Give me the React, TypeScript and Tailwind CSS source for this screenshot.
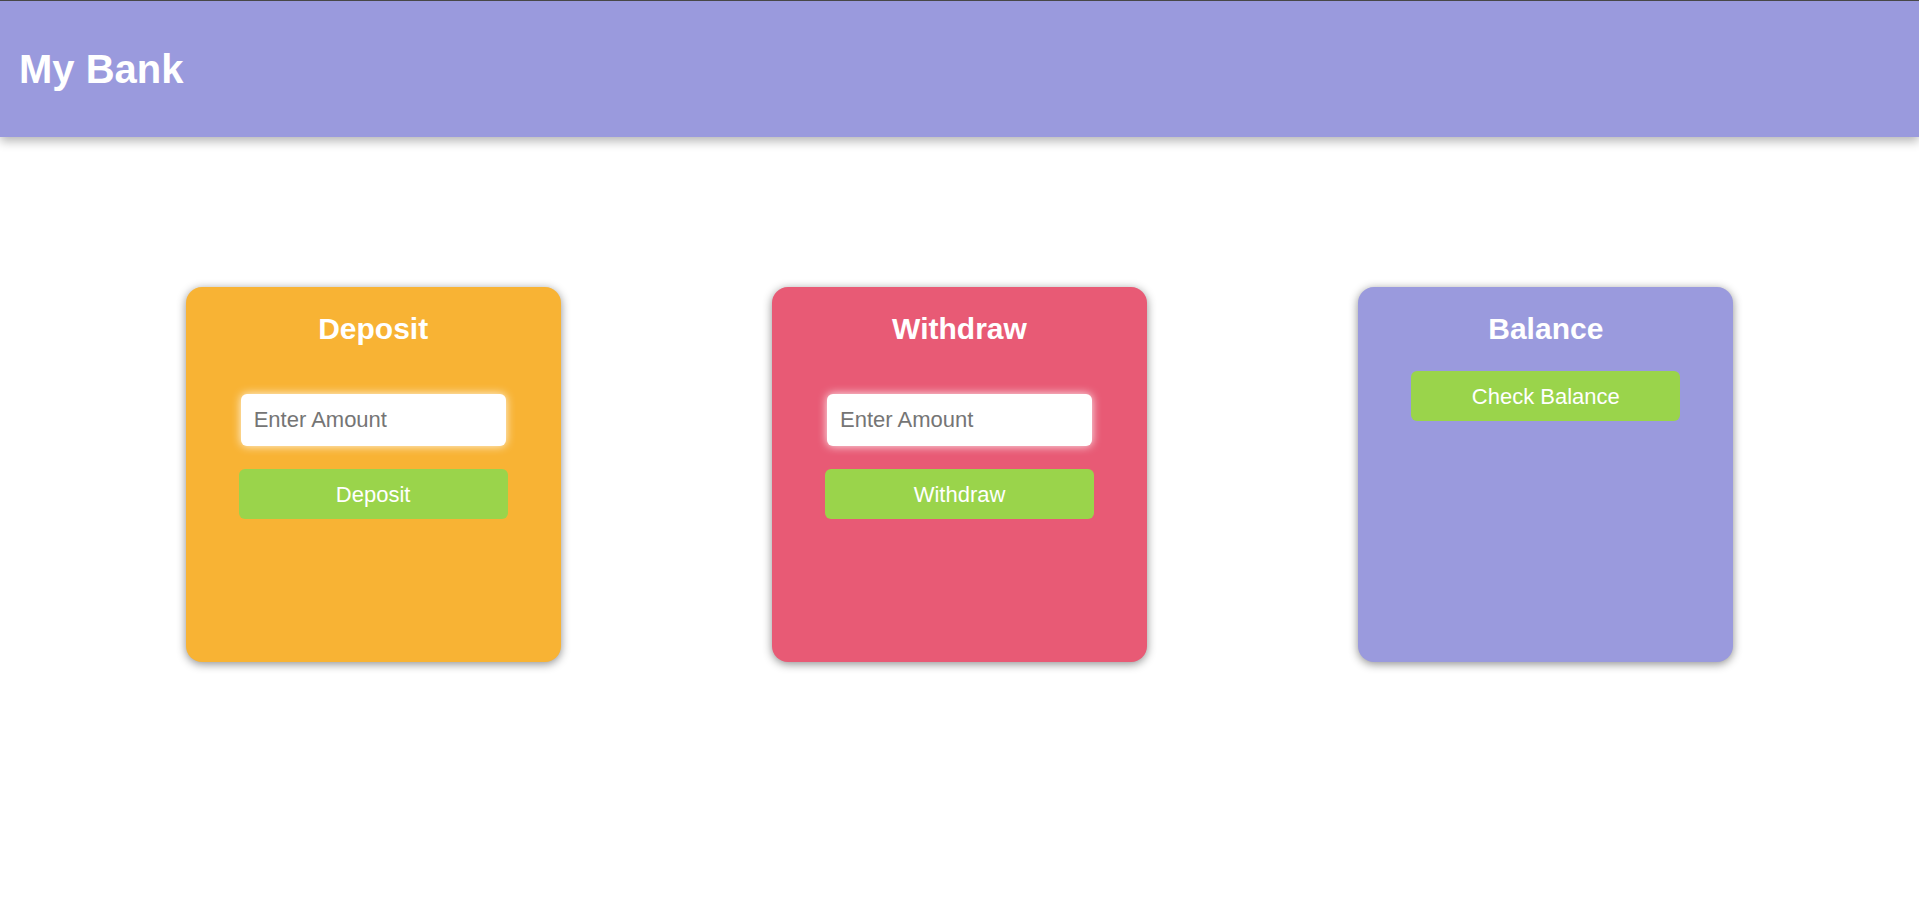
import { useState } from "react";

function Card({
  title,
  color,
  withInput,
  action,
}: {
  title: string;
  color: string;
  withInput: boolean;
  action: string;
}) {
  const [amount, setAmount] = useState("");
  return (
    <div
      className={`w-[375px] h-[375px] rounded-[16px] pt-[25px] flex flex-col items-center shadow-[0_2px_10px_rgba(0,0,0,0.45)] ${color}`}
    >
      <h2 className="text-[30px] leading-[34px] font-bold text-white">{title}</h2>
      {withInput ? (
        <>
          <input
            value={amount}
            onChange={(e) => setAmount(e.target.value)}
            placeholder="Enter Amount"
            className="mt-[48px] w-[265px] h-[52px] rounded-[6px] bg-white px-[13px] text-[22px] text-[#333] placeholder:text-[#757575] outline-none shadow-[0_0_10px_rgba(255,255,255,0.9)]"
          />
          <button className="mt-[23px] w-[269px] h-[50px] rounded-[6px] bg-[#9ad44b] text-white text-[22px]">
            {action}
          </button>
        </>
      ) : (
        <button className="mt-[25px] w-[269px] h-[50px] rounded-[6px] bg-[#9ad44b] text-white text-[22px]">
          {action}
        </button>
      )}
    </div>
  );
}

export default function App() {
  return (
    <div className="min-h-[907px] bg-white font-['Liberation_Sans',Arial,sans-serif]">
      <header className="h-[137px] border-t border-[#474747] bg-[#9a9add] flex items-center px-[19px] shadow-[0_4px_10px_rgba(0,0,0,0.3)]">
        <h1 className="text-[40px] font-bold text-white">My Bank</h1>
      </header>
      <main className="mt-[150px] px-[80px] grid grid-cols-3 justify-items-center">
        <Card title="Deposit" color="bg-[#f8b334]" withInput action="Deposit" />
        <Card title="Withdraw" color="bg-[#e85a75]" withInput action="Withdraw" />
        <Card title="Balance" color="bg-[#9a9add]" withInput={false} action="Check Balance" />
      </main>
    </div>
  );
}
